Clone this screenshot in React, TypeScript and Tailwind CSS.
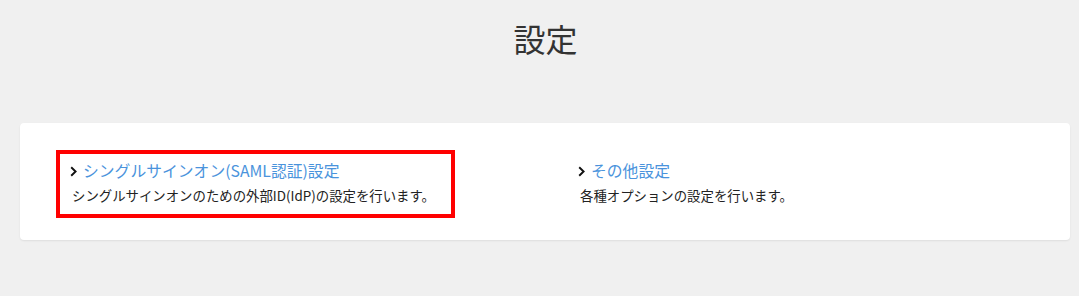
function Chevron() {
  return (
    <svg width="7" height="11" viewBox="0 0 7 11" className="mr-[6px] shrink-0" aria-hidden>
      <path d="M1.2 1.2 L5.6 5.5 L1.2 9.8" fill="none" stroke="#111" strokeWidth="1.9" />
    </svg>
  )
}

function SettingLink({ title, desc, highlight }: { title: string; desc: string; highlight?: boolean }) {
  return (
    <a
      href="#"
      className={
        highlight
          ? "inline-block w-[399px] border-4 border-[#ff0000] pl-[10px] pr-[12px] pt-[6px] pb-[9px]"
          : "inline-block border-4 border-transparent pl-[10px] pr-[12px] pt-[6px] pb-[9px]"
      }
    >
      <div className="flex items-center text-[15.8px] leading-[22px] text-[#4a93dc]">
        <Chevron />
        {title}
      </div>
      <p className="mt-[3px] pl-[2px] text-[13.4px] leading-[20px] text-[#222]">{desc}</p>
    </a>
  )
}

export default function App() {
  return (
    <div
      className="min-h-[296px] w-full bg-[#f0f0f0] pt-[14px] text-[#333]"
      style={{ fontFamily: '"Noto Sans CJK JP", "Noto Sans", sans-serif' }}
    >
      <h1 className="pl-[12px] text-center text-[32px] leading-[48px] font-normal text-[#333]">設定</h1>
      <div className="ml-[20px] mr-[9px] mt-[61px] rounded-[4px] bg-white pl-[36px] pt-[27px] pb-[22px] shadow-[0_1px_2px_rgba(0,0,0,0.08)]">
        <div className="grid grid-cols-[508px_1fr]">
          <div>
            <SettingLink
              highlight
              title="シングルサインオン(SAML認証)設定"
              desc="シングルサインオンのための外部ID(IdP)の設定を行います。"
            />
          </div>
          <div>
            <SettingLink title="その他設定" desc="各種オプションの設定を行います。" />
          </div>
        </div>
      </div>
    </div>
  )
}
